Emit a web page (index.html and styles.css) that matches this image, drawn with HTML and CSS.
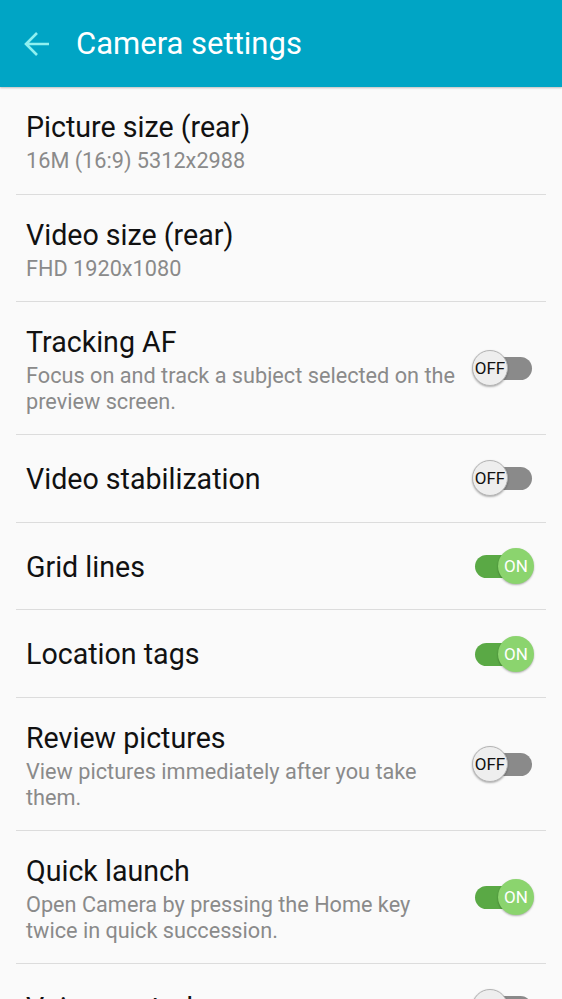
FILE: index.html
```html
<!DOCTYPE HTML>
<html>
<head>
	<meta charset="utf-8" />
	<title>Camera settings</title>
	<link rel="stylesheet" href="styles.css">
</head>
<body>

<div class="header">
	<svg class="back" width="26" height="26" viewBox="0 0 26 26">
		<path d="M25 13 H3 M13 2 L2 13 L13 24" fill="none" stroke="#8ff0f0" stroke-width="2.6" />
	</svg>
	<h1>Camera settings</h1>
</div>

<div class="list">

	<div class="row">
		<div class="text">
			<p class="title">Picture size (rear)</p>
			<p class="sub">16M (16:9) 5312x2988</p>
		</div>
	</div>

	<div class="row">
		<div class="text">
			<p class="title">Video size (rear)</p>
			<p class="sub">FHD 1920x1080</p>
		</div>
	</div>

	<div class="row">
		<div class="text">
			<p class="title">Tracking AF</p>
			<p class="sub">Focus on and track a subject selected on the preview screen.</p>
		</div>
		<div class="toggle off"><span class="knob">OFF</span></div>
	</div>

	<div class="row">
		<div class="text">
			<p class="title">Video stabilization</p>
		</div>
		<div class="toggle off"><span class="knob">OFF</span></div>
	</div>

	<div class="row">
		<div class="text">
			<p class="title">Grid lines</p>
		</div>
		<div class="toggle on"><span class="knob">ON</span></div>
	</div>

	<div class="row">
		<div class="text">
			<p class="title">Location tags</p>
		</div>
		<div class="toggle on"><span class="knob">ON</span></div>
	</div>

	<div class="row">
		<div class="text">
			<p class="title">Review pictures</p>
			<p class="sub">View pictures immediately after you take them.</p>
		</div>
		<div class="toggle off"><span class="knob">OFF</span></div>
	</div>

	<div class="row">
		<div class="text">
			<p class="title">Quick launch</p>
			<p class="sub">Open Camera by pressing the Home key twice in quick succession.</p>
		</div>
		<div class="toggle on"><span class="knob">ON</span></div>
	</div>

	<div class="row">
		<div class="text">
			<p class="title">Voice control</p>
		</div>
		<div class="toggle off"><span class="knob">OFF</span></div>
	</div>

</div>

</body>
</html>
```

FILE: styles.css
```css
body {
	margin: 0;
	background: #fafafa;
	font-family: Roboto, "Noto Sans", sans-serif;
	overflow: hidden;
}

.header {
	height: 87px;
	background: #00a5c5;
	display: flex;
	align-items: center;
	box-shadow: 0 1px 2px rgba(0,0,0,0.25);
	position: relative;
}

.back {
	margin-left: 24px;
	margin-top: 1px;
}

.header h1 {
	margin: 0 0 0 26px;
	color: #ffffff;
	font-weight: normal;
	font-size: 31px;
}

.list {
	margin: 0 16px;
}

.row {
	display: flex;
	align-items: center;
	box-sizing: border-box;
	min-height: 87.7px;
	padding: 21px 14px 20px 10px;
	border-bottom: 1px solid #dcdcdc;
}

.text {
	flex: 1;
	padding-right: 14px;
}

.title {
	margin: 0;
	font-size: 28.6px;
	line-height: 38px;
	color: #111111;
}

.sub {
	margin: 2px 0 0;
	font-size: 21.7px;
	line-height: 25.5px;
	color: #8a8a8a;
}

.toggle {
	width: 57px;
	height: 23px;
	border-radius: 12px;
	position: relative;
	flex-shrink: 0;
}

.toggle.off {
	background: #8a8a8a;
}

.toggle.on {
	background: #5aa945;
}

.knob {
	position: absolute;
	top: -7px;
	width: 36px;
	height: 36px;
	border-radius: 50%;
	display: flex;
	align-items: center;
	justify-content: center;
	font-size: 17px;
	box-sizing: border-box;
}

.off .knob {
	left: -3px;
	background: #eeeeee;
	border: 1px solid #b4b4b4;
	color: #111111;
	box-shadow: 0 1px 2px rgba(0,0,0,0.3);
}

.on .knob {
	right: -2px;
	background: #8bd46e;
	color: #ffffff;
	box-shadow: 0 1px 2px rgba(0,0,0,0.3);
}
```
